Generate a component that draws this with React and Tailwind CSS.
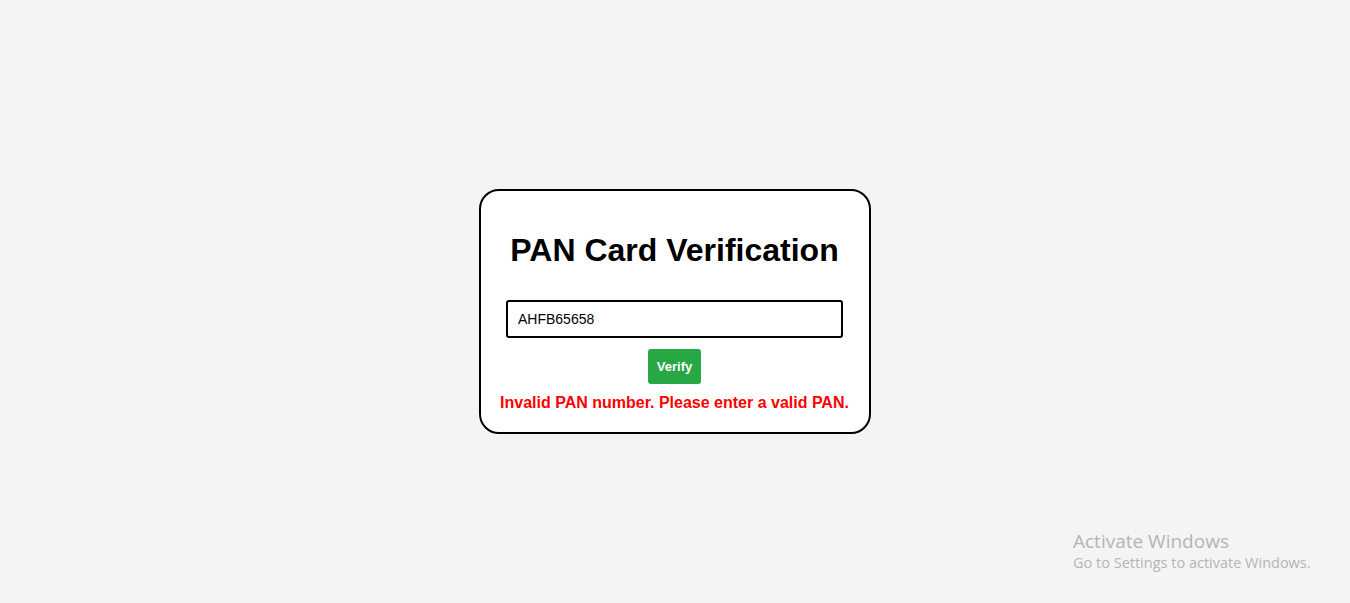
import React, { useState } from 'react';

const App = () => {
    const [pan, setPan] = useState('AHFB65658');
    const [error, setError] = useState('Invalid PAN number. Please enter a valid PAN.');

    const handleVerify = () => {
        // PAN format: 5 letters, 4 digits, 1 letter
        if (/^[A-Z]{5}[0-9]{4}[A-Z]$/.test(pan.toUpperCase())) {
            setError('');
        } else {
            setError('Invalid PAN number. Please enter a valid PAN.');
        }
    };

    return (
        <div className="relative min-h-screen h-[603px] bg-[#f4f4f4] flex flex-col items-center pt-[189px] pr-[1px] font-['Liberation_Sans',Arial,sans-serif] overflow-hidden">
            <div className="w-[392px] bg-white border-2 border-black rounded-[20px] p-5 flex flex-col items-center">
                <h1 className="text-[32px] leading-[37px] font-bold text-black mt-[21px] mb-[31px]">PAN Card Verification</h1>

                <input
                    type="text"
                    value={pan}
                    onChange={(e) => setPan(e.target.value)}
                    className="w-[337px] h-[38px] px-[10px] border-2 border-black rounded-[3px] text-[14px] text-black outline-none"
                />

                <button
                    onClick={handleVerify}
                    className="mt-[11px] w-[53px] h-[35px] bg-[#28a745] text-white text-[13px] font-bold rounded-[3px]"
                >
                    Verify
                </button>

                {error && (
                    <p className="mt-[10px] -mx-2 whitespace-nowrap text-center text-[16px] leading-[18px] font-bold text-[#ff0000]">{error}</p>
                )}
            </div>

            <div className="absolute left-[1073px] top-[529px] text-[#b4b4b4] font-['Open_Sans',sans-serif] pointer-events-none">
                <div className="text-[19px] leading-[24px]">Activate Windows</div>
                <div className="text-[14.5px] leading-[20px]">Go to Settings to activate Windows.</div>
            </div>
        </div>
    );
};

export default App;
